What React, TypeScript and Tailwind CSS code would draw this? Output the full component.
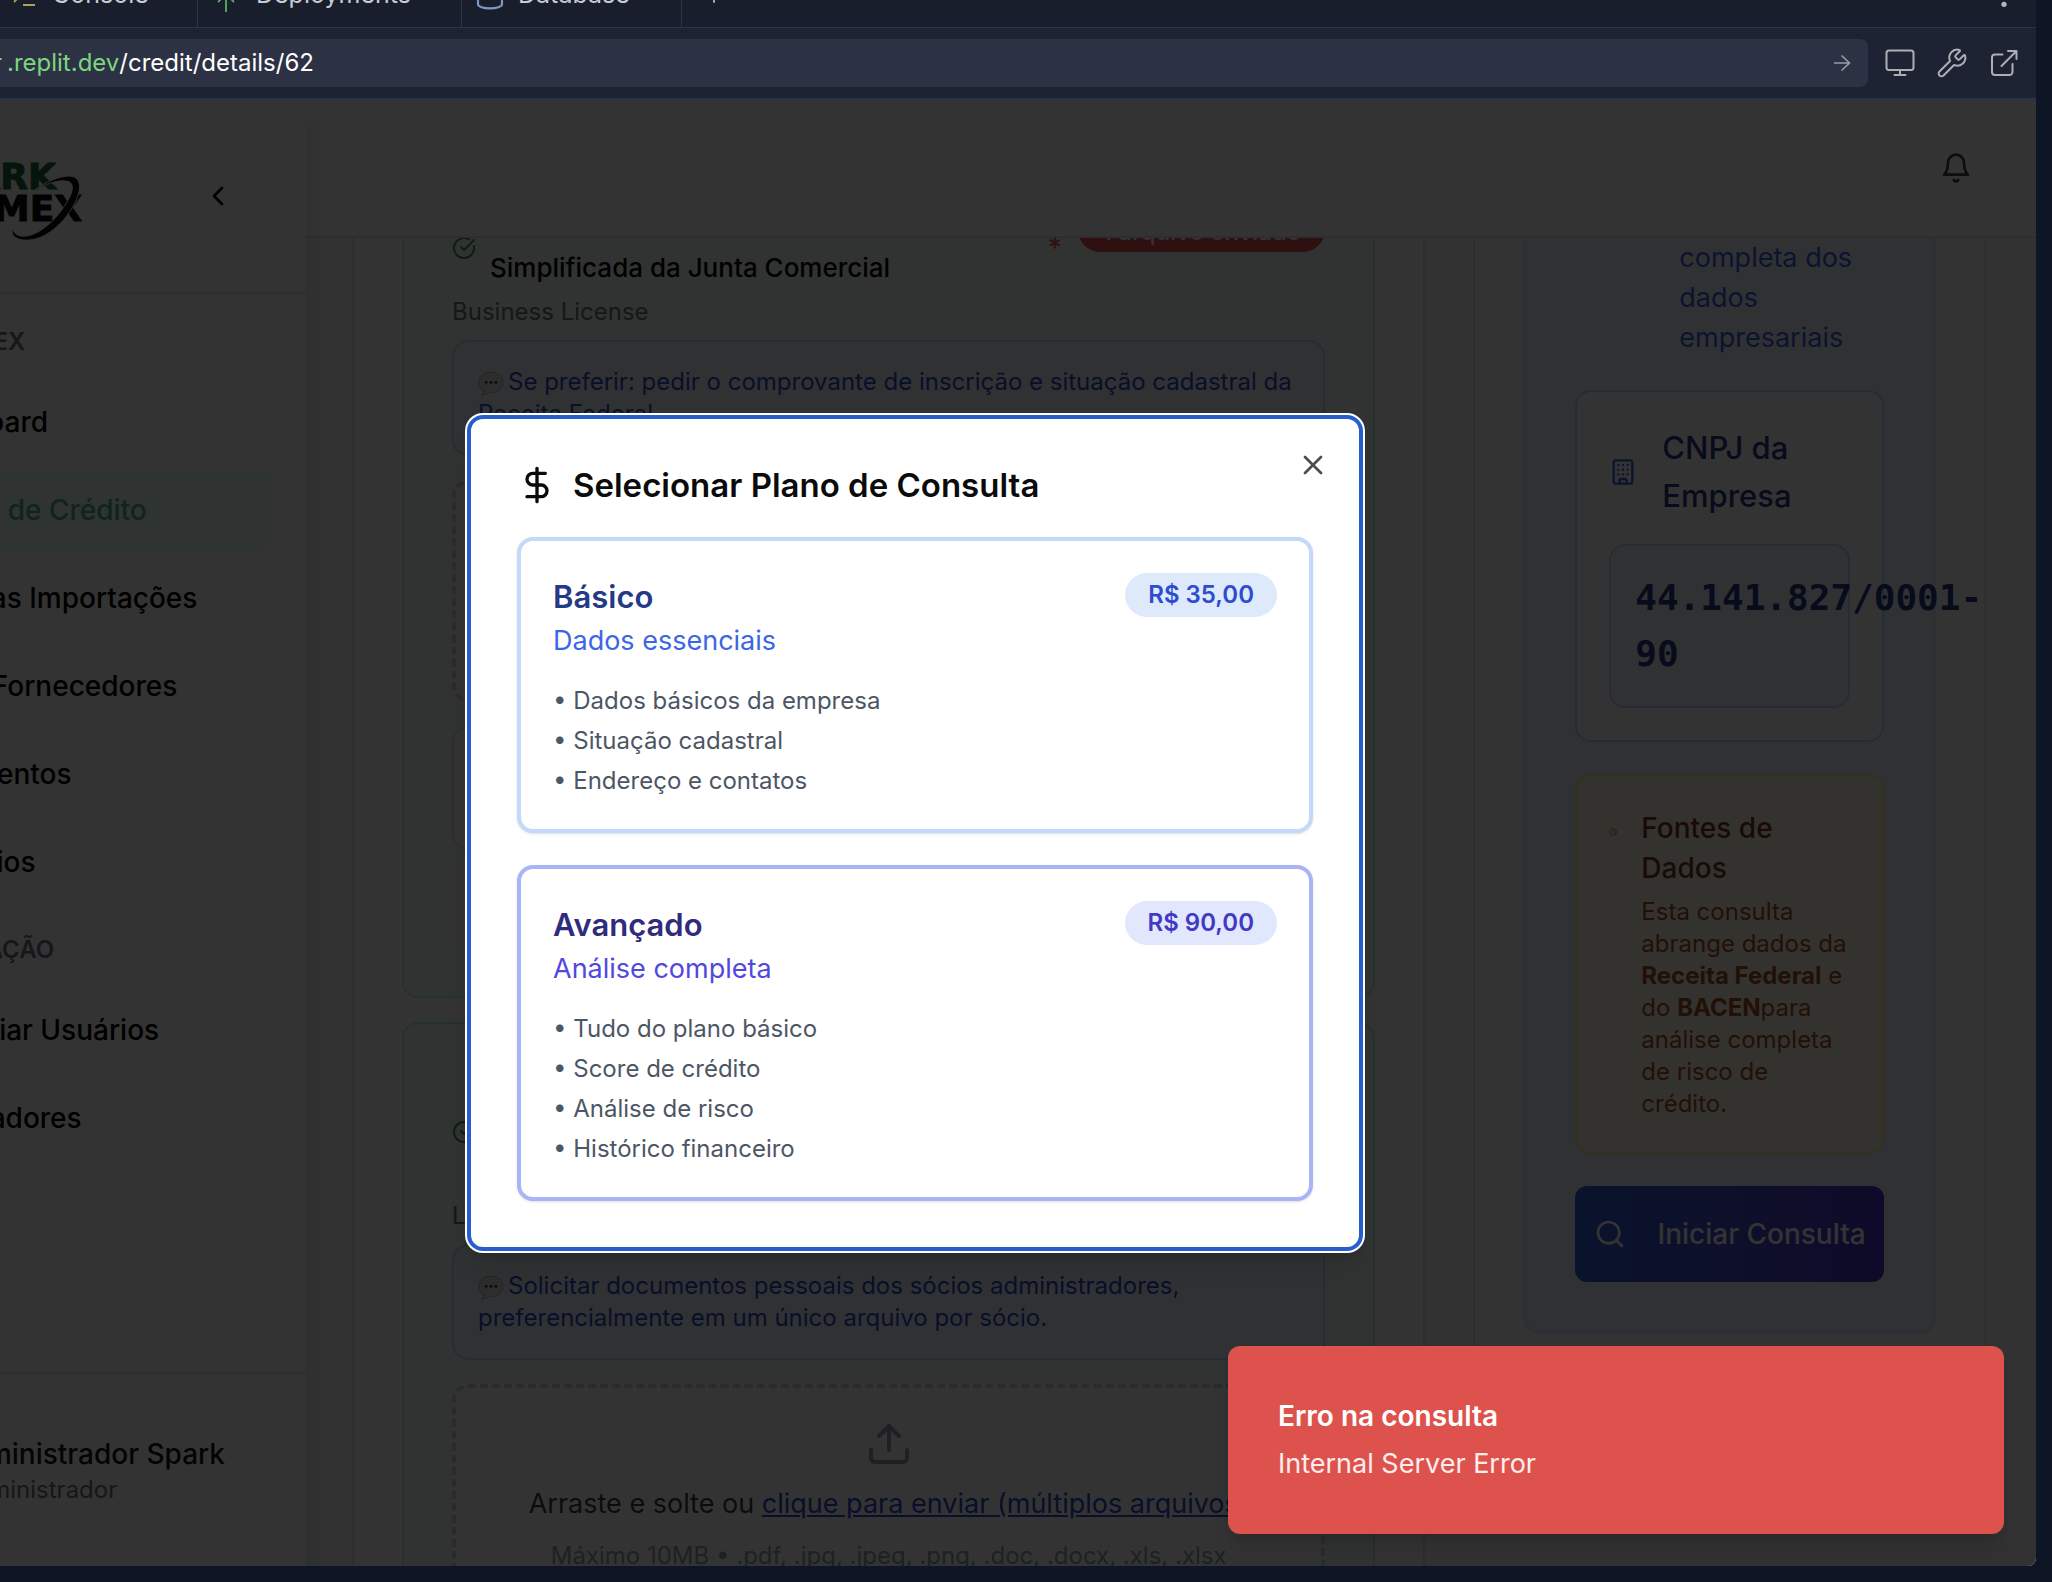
import React from "react";
import {
  Building,
  ChevronLeft,
  CircleAlert,
  CircleCheckBig,
  Database,
  DollarSign,
  MoreVertical,
  Plus,
  Search,
  Upload,
  Wrench,
  X,
} from "lucide-react";

const mainNav = [
  { label: "Dashboard", active: false },
  { label: "Análise de Crédito", active: true },
  { label: "Todas as Importações", active: false },
  { label: "Todos Fornecedores", active: false },
  { label: "Documentos", active: false },
  { label: "Relatórios", active: false },
];

const adminNav = [
  { label: "Gerenciar Usuários", active: false },
  { label: "Importadores", active: false },
];

function BrowserTabs() {
  return (
    <div className="flex h-7 shrink-0 items-end justify-between overflow-hidden border-b border-[#2d3446] bg-[#181e2b] text-[25px] text-[#c9ccd3]">
      <div className="flex h-16 items-center">
        <button className="flex h-full w-[198px] items-center gap-4 border-r border-[#2d3446] pl-3">
          <svg width="24" height="24" viewBox="0 0 24 24" fill="none" stroke="#b39d62" strokeWidth="1.8">
            <path d="M2 5l7 7-7 7M11 22h12" />
          </svg>
          Console
        </button>
        <button className="flex h-full w-[264px] items-center gap-5 border-r border-[#2d3446] pl-[18px]">
          <svg width="20" height="36" viewBox="0 0 20 36" fill="none" stroke="#5cae62" strokeWidth="1.8">
            <path d="M10 35V17M2 25l8-8 8 8" />
          </svg>
          Deployments
        </button>
        <button className="flex h-full w-[220px] items-center gap-3 border-r border-[#2d3446] pl-3">
          <Database size={32} strokeWidth={1.6} color="#7f98c4" />
          Database
        </button>
        <button className="pl-5" aria-label="Nova aba">
          <Plus size={24} strokeWidth={2} color="#a3a8b3" />
        </button>
      </div>
      <button className="flex h-16 items-center pr-4" aria-label="Mais opções">
        <MoreVertical size={32} color="#b4b7bd" />
      </button>
    </div>
  );
}

function AddressBar() {
  return (
    <div className="flex h-[72px] shrink-0 items-center gap-4 border-b-2 border-[#2b3349] bg-[#1e2333] pr-4">
      <div className="flex h-12 flex-1 items-center rounded-r-lg bg-[#2c3144] pr-4">
        <p className="flex flex-1 text-2xl text-white">
          <span className="mr-[5px] flex w-[2px] justify-end overflow-hidden text-[#7cd67f]">r</span>
          <span className="text-[#7cd67f]">.replit.dev</span>
          <span>/credit/details/62</span>
        </p>
        <button aria-label="Ir">
          <svg width="20" height="20" viewBox="0 0 20 20" fill="none" stroke="#9a9da6" strokeWidth="1.6">
            <path d="M2 10h15M9.500 2.500L17.500 10l-8 7.500" />
          </svg>
        </button>
      </div>
      <div className="flex items-center gap-5 text-[#adafb4]">
        <button aria-label="Dispositivo">
          <svg width="32" height="32" viewBox="0 0 32 32" fill="none" stroke="currentColor" strokeWidth="2" strokeLinecap="round">
            <rect x="2.500" y="3.500" width="27" height="19.500" rx="2.500" />
            <path d="M16 23v5M10.500 28h11" />
          </svg>
        </button>
        <button aria-label="Ferramentas">
          <Wrench size={32} strokeWidth={1.5} />
        </button>
        <button aria-label="Abrir em nova aba">
          <svg width="32" height="32" viewBox="0 0 32 32" fill="none" stroke="currentColor" strokeWidth="2" strokeLinecap="round" strokeLinejoin="round">
            <path d="M14.500 7.500H7a3 3 0 0 0-3 3V25a3 3 0 0 0 3 3h14.500a3 3 0 0 0 3-3v-8" />
            <path d="M20 4h8.500v8M28.500 4L13.500 19" />
          </svg>
        </button>
      </div>
    </div>
  );
}

function Logo() {
  return (
    <svg width="190" height="96" viewBox="0 0 190 96" role="img" aria-label="Spark Comex">
      <g fontFamily="DejaVu Sans, sans-serif" fontWeight="700" fontSize="36" textAnchor="end" strokeWidth="1">
        <text x="142" y="41" fill="#1c6a38" stroke="#1c6a38">SPARK</text>
        <text x="168" y="73" fill="#0a0a0a" stroke="#0a0a0a">COMEX</text>
      </g>
      <path
        d="M121 42C132 34 145 28 155 28C164 28 167 35 165 44C160 64 138 90 116 92C102 93 97 88 98 80C100 86 105 89 112 88C130 86 150 63 157 46C160 38 158 33 151 33C142 32 131 37 121 42Z"
        fill="#0a0a0a"
        stroke="#ffffff"
        strokeWidth="1"
      />
    </svg>
  );
}

function NavList({ items }: { items: { label: string; active: boolean }[] }) {
  return (
    <ul className="flex flex-col gap-2">
      {items.map((item) => (
        <li key={item.label}>
          <a
            href="#"
            className={
              item.active
                ? "flex h-20 items-center rounded-xl bg-emerald-50 pl-[76px] text-[28px] font-medium text-[#4fb583]"
                : "flex h-20 items-center rounded-xl pl-[76px] text-[28px] font-medium text-black"
            }
          >
            {item.label}
          </a>
        </li>
      ))}
    </ul>
  );
}

function Sidebar() {
  return (
    <aside className="relative z-10 flex w-[512px] shrink-0 flex-col bg-white shadow-[0_20px_30px_rgba(0,0,0,0.12)]">
      <div className="flex h-[194px] items-center justify-between border-b-2 border-gray-200 pr-[72px] pl-[120px]">
        <Logo />
        <button aria-label="Recolher menu">
          <ChevronLeft size={32} color="#000000" />
        </button>
      </div>
      <nav className="flex-1 px-8 pt-8">
        <h2 className="mb-6 pl-6 text-2xl font-semibold text-gray-500">SPARK COMEX</h2>
        <NavList items={mainNav} />
        <h2 className="mt-8 mb-6 pl-6 text-2xl font-semibold text-gray-500">ADMINISTRAÇÃO</h2>
        <NavList items={adminNav} />
      </nav>
      <div className="flex h-[194px] flex-col justify-center border-t-2 border-gray-200 pl-[156px]">
        <p className="text-[28px] leading-10 font-medium text-gray-900">Administrador Spark</p>
        <p className="pl-2 text-2xl text-gray-500">Administrador</p>
      </div>
    </aside>
  );
}

function Note({ children }: { children: React.ReactNode }) {
  return (
    <p className="mt-3 rounded-2xl border-2 border-blue-200 bg-blue-50 p-6 text-2xl text-[#2c4dd0]">
      <svg width="26" height="26" viewBox="0 0 24 24" className="mr-1 inline-block" aria-hidden="true">
        <path d="M12 2C5.500 2 1 6 1 11.500c0 3.500 1.800 6 4.500 7.700L3.500 23c3 0 5-1 6.500-2.300 8 .8 13-3.500 13-9.200C23 6 18.500 2 12 2Z" fill="#e2e2e2" stroke="#b5b5a8" />
        <circle cx="7.500" cy="11.500" r="1.300" fill="#333333" />
        <circle cx="12" cy="11.500" r="1.300" fill="#333333" />
        <circle cx="16.500" cy="11.500" r="1.300" fill="#333333" />
      </svg>
      {children}
    </p>
  );
}

function Documents() {
  return (
    <section className="col-span-2 border-x-2 border-gray-200 bg-white px-12">
      <article className="rounded-b-2xl border-2 border-t-0 border-green-200 bg-green-50 px-12 pb-12">
        <div className="flex items-start justify-between">
          <div className="flex items-center gap-[14px]">
            <CircleCheckBig size={24} className="text-[#37964a]" />
            <h3 className="w-[480px] text-[26px] leading-10 font-medium text-black">
              Contrato Social ou Certidão Simplificada da Junta Comercial
            </h3>
          </div>
          <div className="flex items-start gap-4">
            <span className="pt-5 text-[28px] leading-10 font-medium text-[#e0524d]">*</span>
            <span className="flex h-11 items-center rounded-full bg-[#e0524d] px-6 pt-1 text-2xl font-medium text-white">
              1 arquivo enviado
            </span>
          </div>
        </div>
        <p className="mt-2 text-2xl text-gray-500">Business License</p>
        <Note>Se preferir: pedir o comprovante de inscrição e situação cadastral da Receita Federal.</Note>
        <div className="mt-6 h-[222px] rounded-2xl border-4 border-dashed border-gray-300 bg-white" />
        <div className="mt-6 h-[124px] rounded-2xl border-2 border-gray-200 bg-white" />
        <div className="mt-5 h-[78px] rounded-2xl bg-red-50" />
      </article>
      <article className="mt-6 rounded-2xl border-2 border-green-200 bg-green-50 p-12">
        <div className="flex items-center gap-[14px]">
          <CircleCheckBig size={24} className="text-[#37964a]" />
          <h3 className="w-[280px] text-[26px] leading-10 font-medium text-black">
            Documentos Pessoais dos Sócios Administradores
          </h3>
        </div>
        <p className="mt-2 text-2xl text-gray-500">Legal Representatives</p>
        <Note>Solicitar documentos pessoais dos sócios administradores, preferencialmente em um único arquivo por sócio.</Note>
        <div className="mt-6 flex flex-col items-center rounded-2xl border-4 border-dashed border-gray-300 bg-white p-8">
          <Upload size={48} className="text-gray-400" />
          <p className="mt-4 text-[27px] leading-10 text-gray-700">
            Arraste e solte ou{" "}
            <a href="#" className="text-[#2c4dd0] underline">
              clique para enviar (múltiplos arquivos)
            </a>
          </p>
          <p className="mt-4 text-2xl text-gray-400">Máximo 10MB • .pdf, .jpg, .jpeg, .png, .doc, .docx, .xls, .xlsx</p>
        </div>
      </article>
    </section>
  );
}

function CreditCheck() {
  return (
    <section className="border-2 border-t-0 border-gray-200 bg-white px-12 pb-12">
      <div className="rounded-b-2xl border-4 border-t-0 border-blue-100 bg-linear-to-br from-blue-50 to-indigo-50 px-12 pt-[30px] pb-12">
        <p className="pl-[104px] text-[27px] leading-10 text-[#3b66e4]">completa dos dados empresariais</p>
        <div className="mt-8 rounded-2xl border-2 border-blue-200 bg-white p-8">
          <div className="flex items-center gap-[25px]">
            <Building size={28} className="shrink-0 text-[#3b66e4]" />
            <h3 className="text-[31px] leading-12 font-medium text-[#253a86]">CNPJ da Empresa</h3>
          </div>
          <p className="mt-6 rounded-2xl border-2 border-blue-200 bg-blue-50 p-6 font-['DejaVu_Sans_Mono',monospace] text-[36px] leading-14 font-bold text-[#253a86]">
            44.141.827/0001-90
          </p>
        </div>
        <div className="mt-8 flex gap-6 rounded-2xl border-2 border-yellow-200 bg-amber-50 p-8">
          <CircleAlert size={8} className="mt-5 shrink-0 text-amber-700" />
          <div>
            <h4 className="text-[28px] leading-10 font-medium text-[#7c3a18]">Fontes de Dados</h4>
            <p className="mt-2 text-2xl text-[#a8521f]">
              Esta consulta abrange dados da <strong>Receita Federal</strong> e do <strong>BACEN</strong>para análise
              completa de risco de crédito.
            </p>
          </div>
        </div>
        <button className="mt-8 flex h-24 w-full items-center justify-center gap-8 rounded-xl bg-linear-to-r from-[#3560dc] to-[#4a34cc] text-[28px] font-medium whitespace-nowrap text-white">
          <Search size={32} className="shrink-0" />
          Iniciar Consulta
        </button>
      </div>
    </section>
  );
}

const plans = [
  {
    name: "Básico",
    summary: "Dados essenciais",
    price: "R$ 35,00",
    features: ["Dados básicos da empresa", "Situação cadastral", "Endereço e contatos"],
    card: "w-full rounded-2xl border-4 border-[#c3d9fa] bg-white p-8 text-left shadow-sm",
    title: "text-[31px] leading-12 font-semibold text-[#253a86]",
    subtitle: "text-[27px] leading-10 text-[#3b66e4]",
    badge: "flex h-11 items-center rounded-full bg-[#dee9fb] px-[23px] text-2xl font-semibold text-[#2c4dd0]",
  },
  {
    name: "Avançado",
    summary: "Análise completa",
    price: "R$ 90,00",
    features: ["Tudo do plano básico", "Score de crédito", "Análise de risco", "Histórico financeiro"],
    card: "w-full rounded-2xl border-4 border-[#a9b4f6] bg-white p-8 text-left shadow-sm",
    title: "text-[31px] leading-12 font-semibold text-[#302b7c]",
    subtitle: "text-[27px] leading-10 text-[#5048df]",
    badge: "flex h-11 items-center rounded-full bg-[#e1e7fd] px-[23px] text-2xl font-semibold text-[#4338c4]",
  },
];

function PlanDialog() {
  return (
    <div
      role="dialog"
      aria-labelledby="plan-title"
      className="relative w-[896px] rounded-2xl border-4 border-[#265fcd] bg-white p-[46px] shadow-xl ring-2 ring-white"
    >
      <button aria-label="Fechar" className="absolute top-[30px] right-[30px]">
        <X size={32} color="#4d4d4d" />
      </button>
      <h2 id="plan-title" className="flex items-center gap-4 text-[33px] leading-10 font-semibold text-[#0b0b0b]">
        <DollarSign size={40} />
        Selecionar Plano de Consulta
      </h2>
      <div className="mt-8 flex flex-col gap-8">
        {plans.map((plan) => (
          <button key={plan.name} className={plan.card}>
            <span className="flex items-start justify-between">
              <span className="flex flex-col">
                <span className={plan.title}>{plan.name}</span>
                <span className={plan.subtitle}>{plan.summary}</span>
              </span>
              <span className={plan.badge}>{plan.price}</span>
            </span>
            <span className="mt-6 flex flex-col gap-2 text-2xl text-[#4d5665]">
              {plan.features.map((feature) => (
                <span key={feature}>• {feature}</span>
              ))}
            </span>
          </button>
        ))}
      </div>
    </div>
  );
}

function Toast() {
  return (
    <div
      role="alert"
      className="absolute right-8 bottom-8 flex w-[776px] flex-col gap-2 rounded-xl bg-[#de524d] p-[50px] leading-10 text-white shadow-xl"
    >
      <p className="text-[28px] leading-10 font-semibold">Erro na consulta</p>
      <p className="text-[27px] leading-10 text-white/90">Internal Server Error</p>
    </div>
  );
}

export default function App() {
  return (
    <div className="flex h-screen flex-col overflow-hidden bg-[#0e1525] pr-4 pb-4 font-['Inter','Liberation_Sans',sans-serif]">
      <BrowserTabs />
      <AddressBar />
      <div className="relative -ml-[206px] flex min-h-0 flex-1 overflow-hidden rounded-br-lg bg-gray-50">
        <Sidebar />
        <div className="flex min-w-0 flex-1 flex-col">
          <header className="flex h-[138px] shrink-0 items-center justify-end border-b-2 border-gray-200 bg-white pr-16">
            <button aria-label="Notificações">
              <svg width="32" height="32" viewBox="0 0 24 24" fill="none" stroke="#374151" strokeWidth="2" strokeLinecap="round" strokeLinejoin="round">
                <path d="M6 8a6 6 0 0 1 12 0c0 7 3 9 3 9H3s3-2 3-9" />
                <path d="M10.300 21a1.940 1.940 0 0 0 3.400 0" />
              </svg>
            </button>
          </header>
          <main className="min-h-0 flex-1 overflow-hidden">
            <div className="-mt-[30px] grid grid-cols-3 items-start gap-12 pr-[50px] pl-[46px]">
              <Documents />
              <CreditCheck />
            </div>
          </main>
        </div>
        <div className="absolute inset-0 z-20 flex items-center justify-center bg-black/80">
          <PlanDialog />
        </div>
        <div className="absolute inset-0 z-30">
          <Toast />
        </div>
      </div>
    </div>
  );
}
